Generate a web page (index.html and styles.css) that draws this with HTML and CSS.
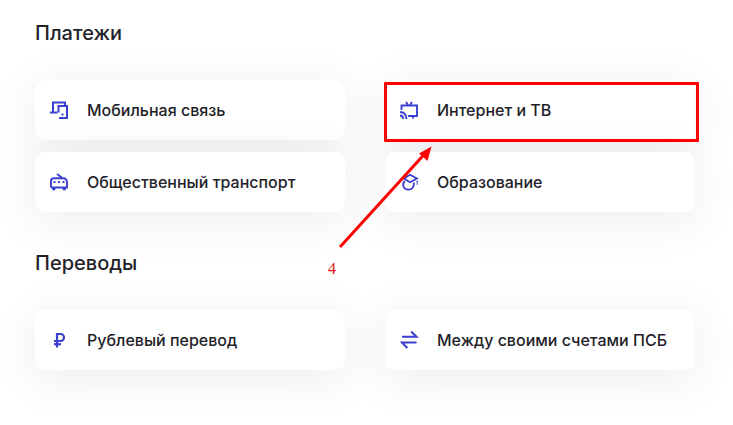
FILE: index.html
```html
<!DOCTYPE html>
<html lang="ru">
<head>
<meta charset="utf-8">
<title>Платежи</title>
<link rel="stylesheet" href="styles.css">
</head>
<body>
<main class="page">
  <h2 class="title">Платежи</h2>
  <div class="grid">
    <a class="card">
      <svg class="icon" viewBox="0 0 18 18" fill="none" stroke="#3b3fd0" stroke-width="2"><path d="M3 11.500V1.500H15V4"/><path d="M0 11.500H7.500"/><path d="M8.500 11.500V5H17V17H9"/><path d="M11.500 13.500h2"/></svg>
      <span>Мобильная связь</span>
    </a>
    <a class="card">
      <svg class="icon" viewBox="0 0 18 18" fill="none" stroke="#3b3fd0" stroke-width="1.900"><path d="M1.500 9V4.500H17V15H8"/><path d="M6 1L8 4M12 1L10 4"/><path d="M0 11Q6 11 6.500 18"/><path d="M0 14.500Q3 14.500 3.200 18"/><path d="M13 15v2.500"/></svg>
      <span>Интернет и ТВ</span>
    </a>
    <a class="card">
      <svg class="icon" viewBox="0 0 18 18" fill="none" stroke="#3b3fd0" stroke-width="1.900"><path d="M1 14.500V8Q1 5.200 4 5.200H13Q16.800 5.200 17 9V14.500H1"/><path d="M7 1L12 4.700"/><path d="M3.500 9h2M8 9h2M12.500 9h2" stroke-width="2"/><circle cx="3.800" cy="15.800" r="1.800" fill="#3b3fd0" stroke="none"/><circle cx="14.200" cy="15.800" r="1.800" fill="#3b3fd0" stroke="none"/></svg>
      <span>Общественный транспорт</span>
    </a>
    <a class="card">
      <svg class="icon" viewBox="0 0 18 18" fill="none" stroke="#3b3fd0" stroke-width="1.800"><path d="M10 1.800L17 5.500L10 9.300L4 5.500Z"/><path d="M5 8C2.200 10 2.200 16 8 16.500C12 16.800 14 14.500 14 9.500"/><path d="M17.200 8v3.500" stroke-dasharray="1.500 1"/></svg>
      <span>Образование</span>
    </a>
  </div>
  <h2 class="title title-next">Переводы</h2>
  <div class="grid">
    <a class="card">
      <svg class="icon" viewBox="0 0 18 18" fill="none" stroke="#3b3fd0" stroke-width="2.200"><path d="M7 16.500V3H10.500A3.500 3.500 0 0 1 10.500 10H4"/><path d="M4 13.200H11"/></svg>
      <span>Рублевый перевод</span>
    </a>
    <a class="card">
      <svg class="icon" viewBox="0 0 18 18" fill="none" stroke="#3b3fd0" stroke-width="2"><path d="M2 5.700H16.500L11.200 .5"/><path d="M16.500 11.500H2L7.300 17"/></svg>
      <span>Между своими счетами ПСБ</span>
    </a>
  </div>
</main>
<div class="highlight"></div>
<svg class="arrow" viewBox="0 0 733 425" aria-hidden="true"><path d="M340 247L425 153.500" stroke="#ff0000" stroke-width="3" fill="none"/><path d="M431.500 146.500L419 153.500L427.500 161Z" fill="#ff0000"/></svg>
<span class="note">4</span>
</body>
</html>
```
FILE: styles.css
```css
* { box-sizing: border-box; }
html, body { margin: 0; height: 100%; }
body {
  position: relative;
  overflow: hidden;
  background: #fff;
  font-family: Inter, "Liberation Sans", sans-serif;
  color: #1f2229;
}
.page { padding: 21px 38px 0 35px; }
.title {
  margin: 0 0 35px;
  font-size: 20px;
  line-height: 24px;
  font-weight: 500;
}
.title-next { margin-top: 39px; }
.grid {
  display: grid;
  grid-template-columns: 310px 310px;
  column-gap: 40px;
  row-gap: 12px;
}
.card {
  display: flex;
  align-items: center;
  gap: 19px;
  height: 60px;
  padding-left: 15px;
  background: #fff;
  border-radius: 10px;
  box-shadow: 0 8px 48px rgba(40, 44, 90, 0.09);
  font-size: 16px;
  font-weight: 500;
}
.icon { width: 18px; height: 18px; flex: none; overflow: visible; }
.highlight {
  position: absolute;
  left: 384px;
  top: 82px;
  width: 315px;
  height: 60px;
  border: 3px solid #ff0000;
  border-radius: 1px;
}
.arrow {
  position: absolute;
  left: 0;
  top: 0;
  width: 733px;
  height: 425px;
}
.note {
  position: absolute;
  left: 328px;
  top: 260px;
  font-family: "Liberation Serif", serif;
  font-weight: 400;
  font-size: 16px;
  line-height: 17px;
  color: #e01414;
}
```
